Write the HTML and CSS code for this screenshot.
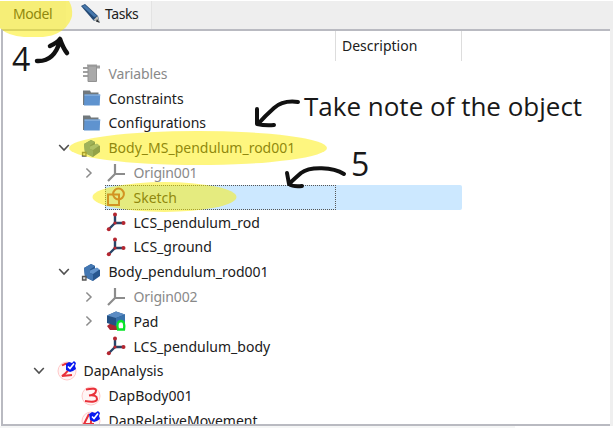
FILE: index.html
```
<!DOCTYPE html>
<html lang="en">
<head>
<meta charset="utf-8">
<title>Model tree</title>
<link rel="stylesheet" href="styles.css">
</head>
<body>
<svg class="defs" width="0" height="0">
  <symbol id="down" viewBox="0 0 12 12"><path d="M1.200 3 6 8l4.800-5" fill="none" stroke="#505050" stroke-width="1.600"/></symbol>
  <symbol id="right" viewBox="0 0 12 12"><path d="M3.400 1.500 8 6l-4.600 4.500" fill="none" stroke="#8c8c8c" stroke-width="1.500"/></symbol>
  <symbol id="folder" viewBox="0 0 20 20"><path d="M2 2.500h7l1 2h7.500V17H2z" fill="#71787c"/><path d="M3.500 6.500h15.700L18.700 17.500H3z" fill="#5f93cf"/><path d="M3.500 6.500h15.700v1.300H3.500z" fill="#86afdd"/></symbol>
  <symbol id="vars" viewBox="0 0 20 20"><path d="M6 1.500h10v2H6zM2 4h5v2H2zm0 4h5v2H2zm0 4h5v2H2zM15 2.500h4v3h-4z" fill="#a0a0a0"/><path d="M7 3h8.500v15.500H7z" fill="#a9a9a9" stroke="#929292"/></symbol>
  <symbol id="body" viewBox="0 0 20 20"><path d="M3 6 10 2l4 2v3l2-1 3 2v6l-7 5-8-4z" fill="#28578f"/><path d="m3 6 7-4 4 2-5 3.500V11l3 1.500V19l-8-4z" fill="#4377b2"/><path d="m9 8.500 7-3 2.500 2-6.500 4.500-3-1z" fill="#6394cc"/><path d="M1.500 14.500H5V18H1.500z" fill="#ddd" stroke="#555" stroke-width="1.300"/></symbol>
  <symbol id="origin" viewBox="0 0 20 20"><path d="M9 1v10h10M9 11l-7 7" fill="none" stroke="#8c8c8c" stroke-width="2.200"/></symbol>
  <symbol id="lcs" viewBox="0 0 20 20"><path d="M9 2.500v8.500h8.500M9 11l-6.500 6.500" fill="none" stroke="#284568" stroke-width="2.400"/><g fill="#b52630"><circle cx="9" cy="2.500" r="2"/><circle cx="17.500" cy="11" r="2"/><circle cx="2.800" cy="17.300" r="2"/><circle cx="9" cy="11" r="1.600"/></g></symbol>
  <symbol id="sketch" viewBox="0 0 20 20"><path d="M2 7.500h11V18H2z" fill="none" stroke="#a63a44" stroke-width="2"/><circle cx="12.500" cy="7" r="5.400" fill="none" stroke="#a63a44" stroke-width="2"/></symbol>
  <symbol id="pad" viewBox="0 0 20 20"><path d="m1 15 4-3 6 3v4H4z" fill="#aa2633"/><path d="m1 4.500 9-4 9 3V12l-9 3-9-3z" fill="#245184"/><path d="m1 4.500 9-4 9 3L10 7z" fill="#5b8cc4"/><path d="m10 7 9-3.500V12l-9 3z" fill="#3972ac"/><path d="M12 18.500q-2-8 2.800-8.500 4.500 0 3.200 8.500z" fill="#fff" stroke="#08e529" stroke-width="2.300"/></symbol>
  <symbol id="two" viewBox="0 0 20 20"><circle cx="10" cy="10" r="9" fill="#fff5f5" stroke="#ffc9c9"/><path d="M5 4.500q7-4 8 0 0 5-8 10.500l10-1" fill="none" stroke="#e93039" stroke-width="2"/><path d="m9 3 3-2 3 1 2-2 2 2-1 3 1 3-3 2-3 1-4-2z" fill="#0718f0"/><path d="m11 5.500 2 2 4-5" fill="none" stroke="#fff" stroke-width="1.600"/></symbol>
  <symbol id="three" viewBox="0 0 20 20"><circle cx="10" cy="10" r="9" fill="#fff5f5" stroke="#ffc9c9"/><path d="M5 3.500q10-2 10 1 0 4-7 5 8-1 8 3.500 0 4-12 2" fill="none" stroke="#e93039" stroke-width="2"/></symbol>
  <symbol id="four" viewBox="0 0 20 20"><circle cx="10" cy="10" r="9" fill="#fff5f5" stroke="#ffc9c9"/><path d="M8 3 3 13h10M11 4 9 18" fill="none" stroke="#e93039" stroke-width="2"/><path d="m8 3 3-2 3 1 3-2 2 2-1 3 1 3-3 2-3 1-4-2z" fill="#0718f0"/><path d="m11 5.500 2 2 4-5" fill="none" stroke="#fff" stroke-width="1.600"/></symbol>
</svg>
<div class="app">
  <nav class="tabs">
    <span class="tab active">Model</span>
    <span class="tab tasks"><svg width="20" height="20" viewBox="0 0 20 20"><path d="m1 2 4-2 13 12 1.500 6-6-1.500z" fill="#244974"/><path d="m2 2 3-1 12 11-3 1z" fill="#4778ac"/><path d="m13.500 16 4-4 2 6.500z" fill="#c5c3ba"/><path d="m17 15 3 4-4-1.500z" fill="#292d32"/></svg>Tasks</span>
  </nav>
  <main class="panel">
    <div class="columns"><span class="col-name"></span><span class="col-desc">Description</span></div>
    <div class="tree">
      <div class="row l2 muted"><i class="tw"></i><svg class="ic"><use href="#vars"/></svg><span>Variables</span></div>
      <div class="row l2"><i class="tw"></i><svg class="ic"><use href="#folder"/></svg><span>Constraints</span></div>
      <div class="row l2"><i class="tw"></i><svg class="ic"><use href="#folder"/></svg><span>Configurations</span></div>
      <div class="row l2"><svg class="tw"><use href="#down"/></svg><svg class="ic"><use href="#body"/></svg><span>Body_MS_pendulum_rod001</span></div>
      <div class="row l3 muted"><svg class="tw"><use href="#right"/></svg><svg class="ic"><use href="#origin"/></svg><span>Origin001</span></div>
      <div class="row l3"><i class="tw"></i><div class="selected"><div class="focus"><svg class="ic"><use href="#sketch"/></svg><span>Sketch</span></div></div></div>
      <div class="row l3"><i class="tw"></i><svg class="ic"><use href="#lcs"/></svg><span>LCS_pendulum_rod</span></div>
      <div class="row l3"><i class="tw"></i><svg class="ic"><use href="#lcs"/></svg><span>LCS_ground</span></div>
      <div class="row l2"><svg class="tw"><use href="#down"/></svg><svg class="ic"><use href="#body"/></svg><span>Body_pendulum_rod001</span></div>
      <div class="row l3 muted"><svg class="tw"><use href="#right"/></svg><svg class="ic"><use href="#origin"/></svg><span>Origin002</span></div>
      <div class="row l3"><svg class="tw"><use href="#right"/></svg><svg class="ic"><use href="#pad"/></svg><span>Pad</span></div>
      <div class="row l3"><i class="tw"></i><svg class="ic"><use href="#lcs"/></svg><span>LCS_pendulum_body</span></div>
      <div class="row l1"><svg class="tw"><use href="#down"/></svg><svg class="ic"><use href="#two"/></svg><span>DapAnalysis</span></div>
      <div class="row l2"><i class="tw"></i><svg class="ic"><use href="#three"/></svg><span>DapBody001</span></div>
      <div class="row l2"><i class="tw"></i><svg class="ic"><use href="#four"/></svg><span>DapRelativeMovement</span></div>
    </div>
  </main>
  <footer class="bottom"></footer>
  <svg class="marks" width="613" height="428" viewBox="0 0 613 428">
    <g fill="#fdee00" fill-opacity=".5">
      <path d="M0 1H69Q73 8 72 16C69 28 57 37 40 37H24Q8 36 0 28z"/>
      <ellipse cx="198" cy="148" rx="129" ry="17"/>
      <ellipse cx="164.500" cy="197" rx="72" ry="15"/>
    </g>
    <g fill="none" stroke="#111" stroke-width="4.500" stroke-linecap="round" stroke-linejoin="round">
      <path d="M37 61Q54 62 60 41M50 46Q57 43 60 39Q63 48 67 53"/>
      <path stroke-width="4" d="M298 102Q283 100 274 108T258 124M257 109V124Q266 126 274 125"/>
      <path stroke-width="4" d="M344 174C333 167 310 166 301 173Q293 180 289 184M287 173 289 184Q293 187 302 186"/>
    </g>
  </svg>
  <span class="note n4">4</span>
  <span class="note take">Take note of the object</span>
  <span class="note n5">5</span>
</div>
</body>
</html>
```
FILE: styles.css
```
* { box-sizing: border-box; }
body { margin: 0; background: #fff; }
.defs { position: absolute; }
.app { position: relative; width: 613px; height: 428px; overflow: hidden; padding-top: 1px; display: flex; flex-direction: column; font-family: "Noto Sans", "Open Sans", sans-serif; font-size: 14px; letter-spacing: 0; color: #202020; }
.tabs { height: 28px; flex: none; display: flex; background: #eee; }
.tab { display: flex; align-items: center; padding-bottom: 3px; letter-spacing: -.4px; }
.active { width: 66px; padding-left: 13px; }
.tasks { width: 86px; padding-left: 14px; gap: 5px; background: #f2f2f2; border-right: 1px solid #e3e3e3; }
.panel { height: 397px; flex: none; margin-right: 3px; border: 2px solid #b9bac1; border-right: 0; margin-left: 1px; box-shadow: 3px 0 #efefef; overflow: hidden; }
.columns { height: 30px; display: flex; }
.col-name { width: 333px; border-right: 1px solid #ddd; }
.col-desc { width: 126px; padding: 0 0 0 6px; line-height: 30px; border-right: 1px solid #ddd; }
.tree { display: flex; flex-direction: column; }
.row { height: 24.8px; flex: none; display: flex; align-items: center; white-space: nowrap; }
.l1 { padding-left: 30px; }
.l2 { padding-left: 55px; }
.l3 { padding-left: 80px; }
.tw { width: 12px; height: 12px; margin-right: 11px; flex: none; }
.ic { width: 20px; height: 20px; margin-right: 7.5px; flex: none; }
.l1 .tw { margin-right: 12px; }
.l1 .ic { margin-right: 6.5px; }
.muted { color: #898989; letter-spacing: -.15px; }
.selected { width: 357px; height: 25px; margin-left: -1px; background: #cce8ff; border-radius: 2px; }
.focus { width: 231px; height: 25px; border: 1px dotted #555; display: flex; align-items: center; }
.bottom { width: 515px; height: 2px; background: #f5f6f6; }
.marks { position: absolute; left: 0; top: 0; }
.note { position: absolute; color: #181818; letter-spacing: 0; white-space: nowrap; line-height: 36px; font-family: "Open Sans", sans-serif; }
.n4 { left: 12px; top: 41px; font-size: 32px; }
.take { left: 304px; top: 88px; font-size: 26px; }
.n5 { left: 351px; top: 146px; font-size: 32px; }
```
